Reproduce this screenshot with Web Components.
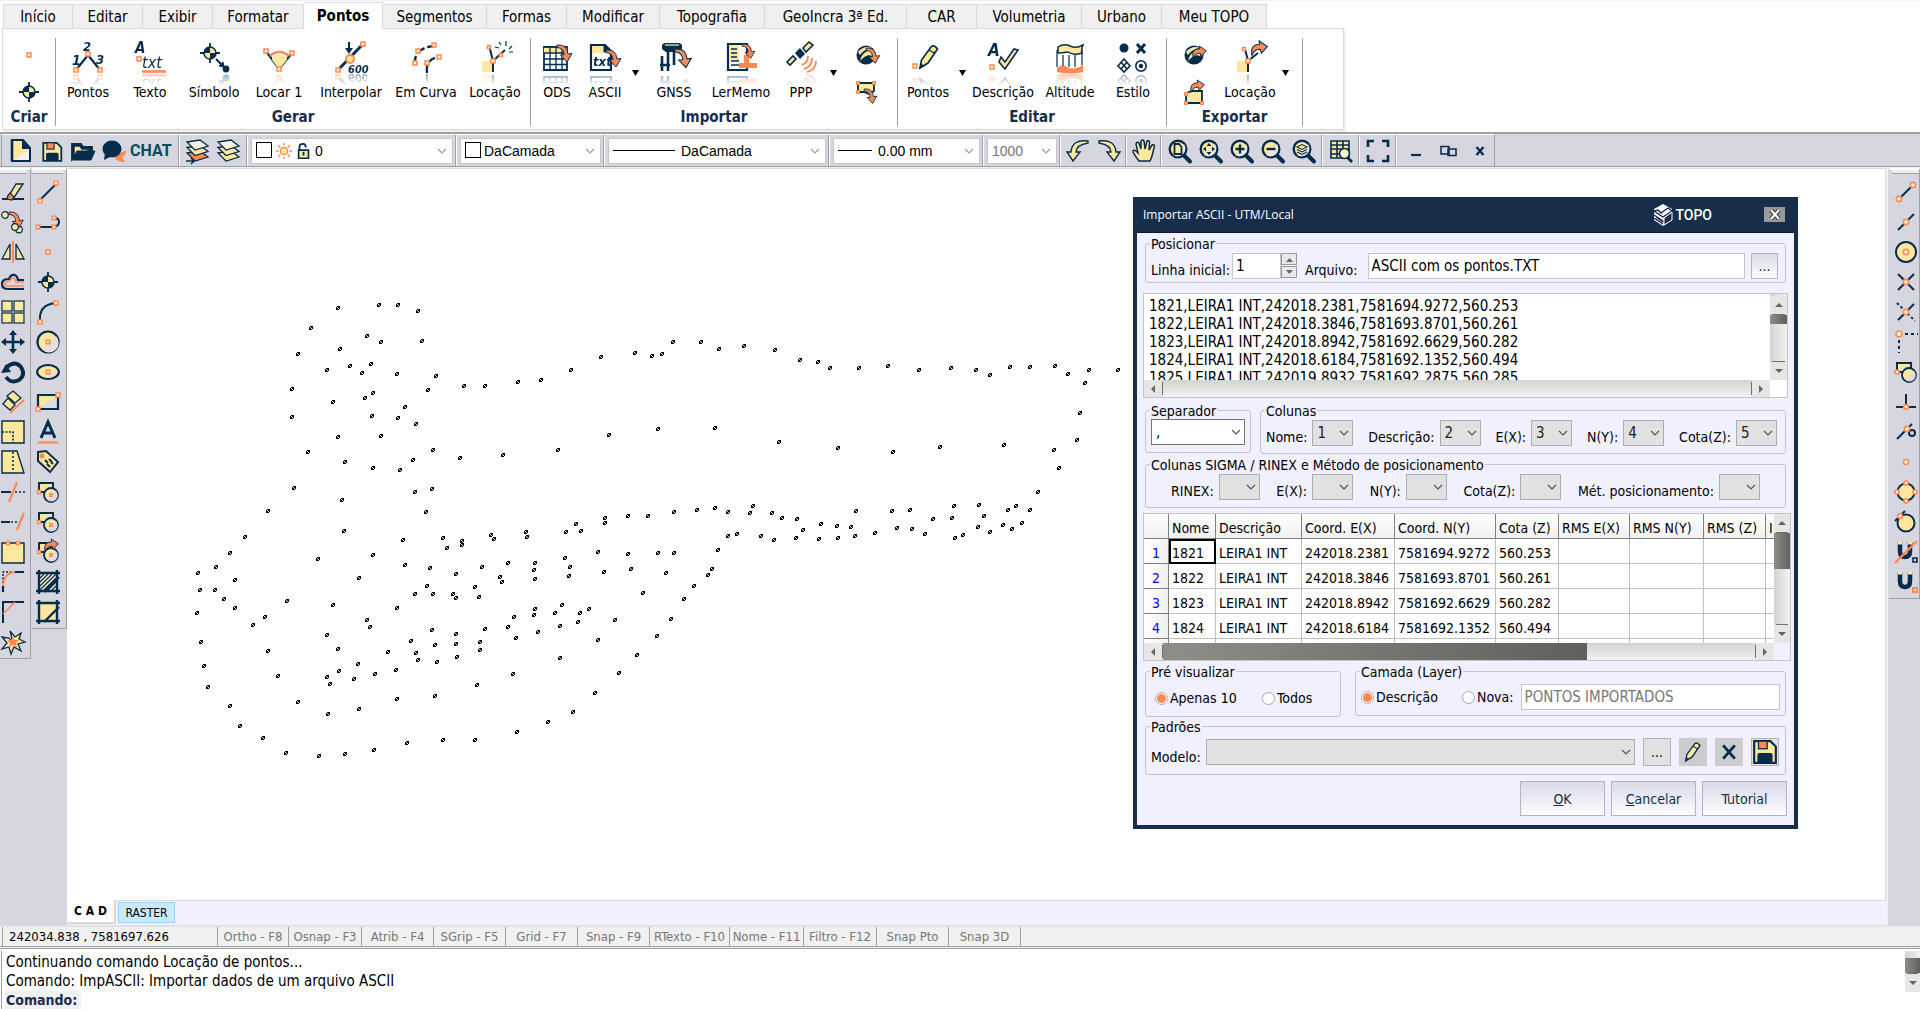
<!DOCTYPE html>
<html lang="pt-BR">
<head>
<meta charset="utf-8">
<title>TOPO</title>
<style>
html,body{margin:0;height:100%}
body{font:14px/18px "DejaVu Sans Condensed","DejaVu Sans",sans-serif;color:#000;background:#fff;overflow:hidden;
--navy:#162e4a;--bar:#d6d6e0;--soft:#f0f0ff;--line:#d9d9d9;--dark:#a0a0a0}
</style>
</head>
<body>
<topo-app></topo-app>
<script>
const N='#062c4c',Y='#ffe79e',O='#ff8a52';
const sq=(x,y,s=4)=>`<rect x="${x-s/2}" y="${y-s/2}" width="${s}" height="${s}" fill="#fff3d8" stroke="${O}" stroke-width="1.5"/>`;
const ci=(x,y,r=2.6)=>`<circle cx="${x}" cy="${y}" r="${r}" fill="#fff" stroke="${O}" stroke-width="1.7"/>`;
const p=(d,w=2,c=N,f='none',x='')=>`<path d="${d}" fill="${f}" stroke="${c}" stroke-width="${w}" ${x}/>`;
const tx=(x,y,s,t,c=N,w=700)=>`<text x="${x}" y="${y}" font-size="${s}" font-weight="${w}" fill="${c}" font-family="DejaVu Sans Condensed,DejaVu Sans,sans-serif">${t}</text>`;
const swoop=(x,y,k=1)=>`<g transform="translate(${x} ${y}) scale(${k})"><path d="M-1 0Q9 -1 10 9L14 8.5L9 17L2.5 10L6 9.8Q6 3 -1 2.5Z" fill="${O}" stroke="${N}" stroke-width="1"/></g>`;
const up=(x,y,k=1)=>`<g transform="translate(${x} ${y}) scale(${k})"><path d="M0 13Q-2 3 7 3L6.500 0L14 5L8.500 11L7.500 7.500Q2 7.500 0 13Z" fill="${O}" stroke="${N}" stroke-width="1"/></g>`;
const target=(x,y,r)=>`<path d="M${x-r-4} ${y}H${x+r+4}M${x} ${y-r-4}V${y+r+4}" stroke="${N}" stroke-width="1.8"/><circle cx="${x}" cy="${y}" r="${r}" fill="${Y}" stroke="${N}" stroke-width="1.5"/><path d="M${x} ${y}V${y-r}A${r} ${r} 0 0 0 ${x-r} ${y}ZM${x} ${y}V${y+r}A${r} ${r} 0 0 0 ${x+r} ${y}Z" fill="${N}"/>`;
const lens=inner=>`<path d="M15.5 16L22 22.5" stroke="${N}" stroke-width="4" stroke-linecap="round"/><circle cx="10" cy="10" r="8.3" fill="${Y}" stroke="${N}" stroke-width="2.4"/><path d="M16 5A8 8 0 0 1 5 16Z" fill="#e9e6e6"/>${inner}`;
const stack=(c)=>[16,10.5,5].map((y,i)=>p(`M1 ${y-2}L14 ${y-4}L22 ${y+2}L9 ${y+6}Z`,1.3,N,i==0&&c?O:i==2?'#f6f0e0':Y)).join('');
const floppy=`<path d="M2 2H17L22 7V22H2Z" fill="${Y}" stroke="${N}" stroke-width="2"/><rect x="6" y="2" width="8" height="7" fill="${O}" stroke="${N}" stroke-width="1.2"/><path d="M5 22V15Q5 13 7 13H17Q19 13 19 15V22Z" fill="${N}"/>`;
const shapes=p('M3 3H17V12H3Z',1.8,N,Y)+p('M17 3V8L8 12H3Z',0,N,'#e2e0dc')+p('M3 3H17V12H3Z',1.8)+`<circle cx="15" cy="15" r="7" fill="${Y}" stroke="${N}" stroke-width="1.8"/><path d="M20 11A6 6 0 0 1 11 19.5Z" fill="#dedce0"/>`;
const pencil=(f=Y)=>p('M8 25L9.500 17L19 4Q22 1 25.500 6L16 20Z',1.7,N,f)+p('M8 25L9 21L11.500 22.500Z',1,N,N)+p('M17 7L23 10.500',1.3);
const globe=`<circle cx="11" cy="12" r="9.5" fill="${N}"/><path d="M3 9Q9 2 17 5Q9 6 5 12ZM5 18Q6 10 15 7Q18 10 17 13Q12 10 5 18Z" fill="${Y}"/>`;
const ICONS={
 point:[24,sq(12,12,4)],target:[24,target(12,12,6)],
 pontos:[32,tx(0,24,14,'1')+tx(11,10,13,'2')+tx(24,23,13,'3')+p('M4 29L16 14L28 29',2.2)+sq(4,29)+sq(16,13)+sq(28,29)],
 texto:[32,tx(1,12,15,'A')+sq(5,18)+tx(8,27,16,'txt',N,400)+p('M8 30.5H32',2.6,O)],
 simbolo:[32,target(12,12,6)+p('M18 18L25 25',2)+p('M26 26L21 25L25 21Z',1,N,N)+`<circle cx="28" cy="28" r="3.4" fill="${N}"/>`],
 locar:[32,p('M3 10L16 28L29 12',2.2)+p('M9 18Q16 10 24 18L16 28Z',1,Y,Y)+p('M7 15Q16 7 26 15',2.6,O)+sq(3,10)+sq(29,12)+sq(16,28)],
 interpolar:[32,p('M3 29L28 3',2.8)+p('M14 1V9',2)+p('M10 7H18L14 13Z',0,N,N)+`<circle cx="15" cy="18" r="4" fill="${Y}" stroke="${O}" stroke-width="2"/>`+sq(28,3)+sq(3,29)+tx(13,32,11,'600')],
 curva:[32,p('M5 24Q3 7 24 5',2.4,N,'none','stroke-dasharray="9 3"')+p('M17 32Q15 17 30 16',2.4,N,'none','stroke-dasharray="8 3"')+sq(24,4)+sq(8,10)+sq(5,22)+sq(17,22)+sq(29,16)],
 locacao:[32,p('M3 20H13V31H3Z',0,N,Y)+p('M14 20L11 8M14 20L26 9M14 20V31',2)+sq(10,6,3)+sq(14,20)+sq(22,14,3)+p('M22 4l-2-3M27 5V0M30 8l3-3M30 11h4M20 7l-4-1',1.2)],
 ods:[32,p('M3 6H26V29H3Z',1.8,N,'#fff')+p('M3 6H26V12H3Z',0,N,Y)+p('M3 12H26M3 18H26M3 23.5H26M9 6V29M15 6V29M21 6V29',1.3)+p('M3 6H26',1.8)+swoop(17,4,1)],
 ascii:[32,p('M2 4H16L22 10V29H2Z',2.2,N,'#fff')+p('M3 5H15V12H3Z',0,N,Y)+p('M15 4V11H22Z',1,N,N)+tx(4,25,13,'txt')+swoop(18,9,1)],
 gnss:[32,p('M4 5Q4 2 8 2H20Q24 2 24 5V8L20 11H8L4 8Z',0,N,N)+p('M7 4H21',1.3,Y)+p('M10 11V30M16 11V24M4 15V30M2 24H12',2.6)+swoop(18,8,1.1)],
 lermemo:[32,p('M3 3H22V29H3Z',2.2,N,'#fff')+p('M4 4H14V20H4Z',0,N,Y)+p('M6 8H12M6 12H12M6 16H12M6 20H14M6 24H14',1.6)+p('M19 14H24V22H32V27H14V22H19Z',0,O,O)+swoop(18,3,.85)],
 ppp:[32,p('M2 21L8 15L11 18L5 24ZM18 7L24 1L28 4L21 11Z',1.6,N,Y)+p('M10 12L15 7L20 13L15 18Z',0,N,N)+p('M17 24Q23 22 23 15M19 28Q27 26 27 17M22 31Q31 29 31 20',1.9,O)],
 globein:[24,globe+swoop(12,5,.9)],
 globeout:[24,globe+up(10,3,.95)],
 polyin:[24,p('M3 3H19V11L14 14L9 12H3Z',1.8,N,Y)+sq(3,3,2.5)+sq(19,3,2.5)+sq(3,12,2.5)+swoop(10,9,.85)],
 polyout:[24,p('M3 13L9 11H19V23H3Z',1.8,N,Y)+sq(3,14,2.5)+sq(3,23,2.5)+sq(19,23,2.5)+up(8,0,.95)],
 lapis:[32,`<g transform="translate(0 2)">${pencil()}</g>`+sq(3,25)],
 descricao:[32,tx(1,15,17,'A')+sq(5,26)+p('M12 21L18 28L31 9L27 8L18 21L14 16Z',1.6,N,Y)],
 altitude:[32,p('M3 27Q8 22 13 26Q20 30 29 24V31Q16 34 3 31Z',0,O,O)+p('M3 26V9M9 25V14M15 26V14M21 26V14M28 24V9',1.2)+p('M4 6Q10 2 16 5Q22 8 29 4Q27 9 28 12Q20 15 14 11Q8 12 4 12Z',1.5,N,Y)],
 estilo:[32,`<circle cx="7" cy="7" r="4.5" fill="${N}"/>`+p('M20 3L28 12M28 3L20 12',3)+p('M7 18L13 25L7 31L1 25ZM4 21L10 28M10 21L4 28',1.6)+`<circle cx="24" cy="25" r="5.2" fill="none" stroke="${N}" stroke-width="1.6"/><circle cx="24" cy="25" r="2.2" fill="${N}"/>`],
 exlocacao:[32,p('M3 20H13V31H3Z',0,N,Y)+p('M14 20L11 8M14 20L24 12M14 20V31',2)+sq(10,8,3)+sq(14,20)+up(18,0,1.1)],
 novo:[24,p('M3 1H14L21 9V22H3Z',2,N,'#f2f2f5')+p('M4 2H13V10L20 12L4 21Z',0,N,Y)+p('M13 1V10H21Z',0,N,N)+p('M3 1V22',2.6)],
 salvar:[24,`<g transform="translate(1.5 2) scale(.9)">${floppy}</g>`],disquete:[24,floppy],
 abrir:[24,p('M1 20V5H10L12 8H21V11H7L1 20Z',1.8,N,N)+p('M3 18V7H9L11 10H19',1.5,N,Y)+p('M1 21L6 12H24L20 21Z',1,N,N)],
 chat:[24,`<path d="M24 11Q24 17 20 18L23 23Q15 23 12 18Z" fill="${O}"/><ellipse cx="10" cy="10" rx="9.5" ry="8.5" fill="${N}"/><path d="M3 14L2 21L10 17Z" fill="${N}"/>`],
 camada1:[24,stack(1)+p('M0 22H8M5 19L8 22L5 25',1.5)],camada2:[24,stack(0)],
 undo:[24,p('M22 2Q6 0 5 13H1L7 22L14 13H10Q10 6 22 4Z',1.4,N,Y)],
 redo:[24,p('M2 2Q18 0 19 13H23L17 22L10 13H14Q14 6 2 4Z',1.4,N,Y)],
 mao:[24,p('M7 22Q3 17 1 13Q1 10 4 12L6 14L4 5Q5 2 7 4L9 10L9 2Q11 0 12 2L13 10L15 2Q17 1 17.500 3L17 11L20 6Q22 5 22.500 7L20 17Q19 20 18 22Z',1.5,N,Y)],
 z1:[24,lens(p('M6.500 5H11L13.500 8V15H6.500Z',1.8,N,Y))],
 z2:[24,lens(p('M10 4L12.500 7H7.500ZM10 16L12.500 13H7.500ZM4 10L7 7.500V12.500ZM16 10L13 7.500V12.500Z',0,N,N))],
 z3:[24,lens(p('M5.500 10H14.500M10 5.500V14.500',2.4))],z4:[24,lens(p('M5.500 10H14.500',2.4))],
 z5:[24,lens(p('M5 8L10 5.500L15 8L10 10.500ZM5 10.500L10 13L15 10.500M5 13L10 15.500L15 13',1.1,N,'none'))],
 tabela:[24,p('M2 2H20V19H2Z',1.6,N,Y)+p('M2 6H20M2 10H20M2 15H20M8 2V19M14 2V19',1.6)+p('M18 18L23 23',2.8)+`<circle cx="15.500" cy="14.500" r="5" fill="#fff3d0" stroke="${N}" stroke-width="1.6"/>`],
 full:[24,p('M2 8V2H8M16 2H22V8M22 16V22H16M8 22H2V16',2.6)],
 min:[24,p('M7 16H17',2.2)],rest:[24,p('M5 7.500H13V15H5ZM12 10H20V16.500H12Z',1.5)],fechar:[24,p('M8.500 8L15.500 16M15.500 8L8.500 16',2.3)],
 sol:[20,`<circle cx="10" cy="10" r="4" fill="${Y}" stroke="${O}" stroke-width="1.6"/>`+p('M10 1V4M10 16V19M1 10H4M16 10H19M3.500 3.500L6 6M14 14L16.500 16.500M3.500 16.500L6 14M14 6L16.500 3.500',1.5,O)],
 cadeado:[20,p('M5 9V5Q5 2 9 2Q12 2 12 6',2)+p('M4 9H15V18H4Z',1.8,N,Y)+p('M9.500 11V15',2)],
 apagar:[24,p('M1 19H23',2)+p('M15 4H22L12 19H6Z',1.4,N,Y)+p('M9 13L13 17L11 20L6 19Q6 16 9 13Z',1.2,N,O)],
 copiar:[24,`<circle cx="4" cy="5" r="3.3" fill="${Y}" stroke="${N}" stroke-width="1.2"/><circle cx="18" cy="19.500" r="3.300" fill="${Y}" stroke="${N}" stroke-width="1.2"/>`+swoop(9,2,.95)+`<circle cx="14" cy="17" r="3.3" fill="${Y}" stroke="${N}" stroke-width="1.2"/>`],
 espelho:[24,p('M9 4V19H1ZM15 4V19H23Z',1.3,N,Y)+p('M12 1V23',2,O)],
 offset:[24,p('M23 10H17Q16 4 11 5Q9 6 8 9Q1 9 1 14Q1 19 7 19H23',2.2)+p('M23 12H15Q14 7 11 8Q9 11 8 11Q4 12 4 14Q4 16 7 16H23',1.4,O)],
 matriz:[24,[[1,1],[13,1],[1,13],[13,13]].map(a=>`<rect x="${a[0]}" y="${a[1]}" width="10" height="10" fill="${Y}" stroke="${N}" stroke-width="1.200"/>`).join('')],
 mover:[24,p('M3 12H21M12 3V21',2.6)+p('M12 0L16 5H8ZM12 24L16 19H8ZM0 12L5 8V16ZM24 12L19 8V16Z',0,N,N)],
 girar:[24,p('M6 7Q14 0 20 7Q25 15 18 20Q10 24 5 17',3.8)+p('M0 13L5 4L10 12Z',0,N,N)],
 alinhar:[24,p('M6 6L12 1L20 8L14 13ZM2 14L7 8L14 15L9 20Z',1.3,N,Y)+p('M9 23L23 10',2,O)],
 escala:[24,p('M1 1H23V23H1Z',1.4,N,Y)+p('M1 12H12V23',1.6,N,'none','stroke-dasharray="2 1.500"')],
 esticar:[24,p('M1 1H16L23 23H1Z',1.4,N,Y)+p('M12 2V22',1.6,N,'none','stroke-dasharray="2 2"')],
 cortar:[24,p('M0 12H10',2)+p('M14 12H24',1.4,N,'none','stroke-dasharray="2 2"')+p('M16 2L8 22',2.2,O)],
 estender:[24,p('M0 12H9',2)+p('M10 12H19',1.4,N,'none','stroke-dasharray="2 2"')+p('M23 3L16 20',2.2,O)],
 quebrar:[24,p('M1 3H23V23H1Z',1.4,N,Y)+sq(7,3,3)+sq(17,3,3)],
 filete:[24,p('M2 22V16M14 2H23',2.2)+p('M2 13V2H12',1.6,N,'none','stroke-dasharray="2 1.500"')+p('M2 16Q3 3 14 2',1.8,O)],
 chanfro:[24,p('M2 23V2H23',2)+p('M2 14L14 2',1.6,O)],
 explodir:[24,p('M12 12L9 1L14 7L20 3L18 9L24 12L17 14L20 21L13 17L10 24L8 17L1 19L6 13L1 7L8 8Z',1.3,N,Y)+p('M12 7L13.500 10L18 10L15 13L16 17L12 15L8 17L9 13L6 10L10 10Z',0,O,O)],
 linha:[24,p('M4 20L20 4',2)+sq(4,21)+sq(20,3)],
 poli:[24,p('M2 17H18Q23 16 23 12Q23 8 18 8',2)+sq(2,17,3.500)+sq(18,17,3.500)+sq(18,8,3.500)],
 arco:[24,p('M4 20Q3 5 19 3',2)+sq(4,22)+sq(20,3)],
 circulo:[24,`<circle cx="12" cy="12" r="10.500" fill="${Y}" stroke="${N}" stroke-width="2.200"/><path d="M20 6A9.400 9.400 0 0 1 6 19.500Z" fill="#e2dfdc"/>`+sq(12,12,3.500)],
 elipse:[24,`<ellipse cx="12" cy="12" rx="10.800" ry="7" fill="${Y}" stroke="${N}" stroke-width="2.200"/><path d="M20 8Q22 17 10 18Z" fill="#e2dfdc"/>`+sq(12,12,3.500)],
 ret:[24,p('M2 5H22V19H2Z',0,N,Y)+p('M22 5V19H2Z',0,N,'#dcdae0')+p('M2 5H22V19H2Z',2.2)+sq(2,19)+sq(22,5)],
 letra:[24,p('M5 18L12 2L19 18M8 13H16',3)+p('M2 22.500H22',2.2,O)],
 tag:[24,p('M2 2L10 1L22 12L14 22L2 11Z',2,N,Y)+`<circle cx="6" cy="6" r="2.500" fill="${O}"/>`+p('M9 10l3 3M13 9l3 3M11 14l3 3M15 12l2 2',2)],
 f1:[24,shapes+sq(3,12,3)+sq(15,15,2.500)],f2:[24,shapes+sq(3,12,3)+sq(15,15,2.500)],
 f3:[24,shapes+sq(3,12,3)+sq(15,15,2.500)+up(9,-1,.95)],
 hach:[24,p('M3 3H21V21H3Z',0,N,'#f5ebc4')+p('M4 8L8 4M4 12L12 4M4 16L16 4M4 20L20 4M8 20L20 8M12 20L20 12M16 20L20 16',1.2)+p('M3 0V24M21 0V24M0 3H24M0 21H24',2.400)+p('M8 22L23 7',2.4)],
 contorno:[24,p('M3 3H21V21H3Z',0,N,Y)+p('M3 0V24M21 0V24M0 3H24M0 21H24',2.400)+p('M8 22L23 7',2.4)],
 s1:[24,p('M5 19L19 5',2)+ci(5,19)+ci(19,5)],s2:[24,p('M4 20L20 4',2)+ci(12,12)],
 s3:[24,`<circle cx="12" cy="12" r="10" fill="${Y}" stroke="${N}" stroke-width="2"/>`+ci(12,12)],
 s4:[24,p('M4 4L20 20M20 4L4 20',2)+ci(12,12)],s5:[24,p('M20 4L4 20',2)+p('M3 3L21 21',2,N,'none','stroke-dasharray="2.500 2.500"')+ci(12,12)],
 s6:[24,p('M5 4H24M5 4V23',2,N,'none','stroke-dasharray="3 3"')+ci(5,4,3)],s7:[24,shapes+ci(3,12,2)],
 s8:[24,p('M12 4V17M2 17H22',2)+ci(12,17,2.300)],s9:[24,p('M3 19L18 4',2)+`<circle cx="18" cy="13" r="3" fill="none" stroke="${N}" stroke-width="2"/>`+ci(13,9)],
 s10:[24,ci(12,12,2.500)],s11:[24,`<circle cx="12" cy="12" r="8.500" fill="${Y}" stroke="${N}" stroke-width="2"/>`+ci(12,3,2)+ci(12,21,2)+ci(3,12,2)+ci(21,12,2)],
 s12:[24,`<circle cx="12" cy="13" r="8.500" fill="${Y}" stroke="${N}" stroke-width="2"/>`+p('M1 11L11 1',2)+ci(6,6,2.300)],
 s13:[24,p('M6 2V11Q6 17 11 17Q16 17 16 11V2',4.500)+p('M4 3H8M14 3H18',3,Y)+p('M19 18H23V22H19Z',1.6)+p('M1 23L23 1',2.400,O)],
 s14:[24,p('M6 2V11Q6 17 11 17Q16 17 16 11V2',4.500)+p('M4 3H8M14 3H18',3,Y)+p('M19 18H23V22H19Z',2,O,Y)],
 xis:[24,p('M5 4L19 20M19 4L5 20',3.400)],edit:[32,`<g transform="translate(-1 2)">${pencil('#f4f0a8')}</g>`]
};
const svg=(n,s)=>{const i=ICONS[n];return `<svg viewBox="0 0 ${i[0]} ${i[0]}" width="${s||i[0]}" height="${s||i[0]}" aria-hidden="true" style="display:block;overflow:visible">${i[1]}</svg>`};
const CHEV='<svg class="chev" viewBox="0 0 10 6" width="10" height="6"><path d="M1 1L5 5L9 1" fill="none" stroke="currentColor" stroke-width="1.200"/></svg>';
class Base extends HTMLElement{
 connectedCallback(){if(!this.shadowRoot)this.attachShadow({mode:'open'}).innerHTML=this.render()}
 a(n,d=''){return this.getAttribute(n)??d}
}
const def=(n,f)=>customElements.define(n,class extends Base{render(){return f(this)}});
const BTN='button{appearance:none;border:0;background:none;padding:0;margin:0;font:inherit;color:inherit}';

def('topo-tabs',()=>`<style>:host{display:flex;align-items:flex-end;height:27px;padding-left:3px;border-top:1px solid var(--soft);font-size:15px}${BTN}
button{height:24px;flex:none;width:var(--w);background:#f0f0f0;border:1px solid var(--line);border-left:0;border-bottom:0}
button[aria-selected=true]{height:27px;margin-bottom:-1px;background:#fff;font-weight:bold;position:relative}
button:first-child{border-left:1px solid var(--line)}div{display:flex;align-items:flex-end}</style>
<div role="tablist">${[['Início',70],['Editar',70],['Exibir',70],['Formatar',91],['Pontos',79],['Segmentos',104],['Formas',80],['Modificar',93],['Topografia',105],['GeoIncra 3ª Ed.',142],['CAR',70],['Volumetria',105],['Urbano',80],['Meu TOPO',105]].map(([t,w])=>`<button role="tab" aria-selected="${t=='Pontos'}" style="--w:${w}px">${t}</button>`).join('')}</div>`);

def('ribbon-group',e=>`<style>:host{display:flex;flex-direction:column;border-right:1px solid var(--dark);flex:none;height:88px}
div{display:flex;flex:1;padding:3px 2px 0}h2{margin:0;font-size:15px;line-height:18px;text-align:center;color:var(--navy)}</style><div><slot></slot></div><h2>${e.a('name')}</h2>`);
def('ribbon-button',e=>`<style>:host{display:block;width:var(--w)}${BTN}button{width:100%;display:flex;flex-direction:column;align-items:center;gap:10px}
i{-webkit-box-reflect:below 1px linear-gradient(transparent 62%,rgba(0,0,0,.4))}span{white-space:nowrap;position:relative}</style><button><i>${svg(e.a('icon'))}</i><span>${e.a('label')}</span></button>`);
def('ribbon-stack',e=>`<style>:host{display:flex;flex-direction:column;gap:13px;padding-top:2px;width:var(--w);align-items:center}${BTN}</style>${e.a('icons').split(' ').map(i=>`<button aria-label="${i}">${svg(i)}</button>`).join('')}`);
def('ribbon-arrow',()=>`<style>:host{display:flex;align-items:flex-start;padding-top:29px;width:12px;justify-content:center}${BTN}</style><button aria-label="Mais"><svg width="7" height="6" style="display:block"><path d="M0 0H7L3.500 6Z"/></svg></button>`);
def('topo-ribbon',()=>{const b=(i,l,w)=>`<ribbon-button icon="${i}" label="${l}" style="--w:${w}px"></ribbon-button>`;const s=(i,w)=>`<ribbon-stack icons="${i}" style="--w:${w}px"></ribbon-stack>`;const ar='<ribbon-arrow></ribbon-arrow>';
return `<style>:host{display:flex;width:fit-content;margin-left:2px;border:1px solid var(--line);padding:9px 40px 3px 0;box-shadow:2px 2px 0 #f0f0f0}</style>
<ribbon-group name="Criar">${s('point target',48)}</ribbon-group>
<ribbon-group name="Gerar">${b('pontos','Pontos',60)+b('texto','Texto',64)+b('simbolo','Símbolo',64)+b('locar','Locar 1',66)+b('interpolar','Interpolar',78)+b('curva','Em Curva',72)+b('locacao','Locação',66)}</ribbon-group>
<ribbon-group name="Importar">${b('ods','ODS',48)+b('ascii','ASCII',48)+ar+b('gnss','GNSS',66)+b('lermemo','LerMemo',68)+b('ppp','PPP',52)+ar+s('globein polyin',56)}</ribbon-group>
<ribbon-group name="Editar">${b('lapis','Pontos',56)+ar+b('descricao','Descrição',70)+b('altitude','Altitude',64)+b('estilo','Estilo',62)}</ribbon-group>
<ribbon-group name="Exportar">${s('globeout polyout',52)+b('exlocacao','Locação',58)+ar+'<span style="width:9px"></span>'}</ribbon-group>`});

def('tool-button',e=>`<style>:host{display:block;flex:none}${BTN}button{display:flex;align-items:center;gap:4px;font:bold 16px/24px Roboto,sans-serif;color:#064a60}</style><button aria-label="${e.a('icon')}">${svg(e.a('icon'),24)}<slot></slot></button>`);
def('tool-sep',()=>`<style>:host{display:block;flex:none;width:1px;align-self:stretch;background:var(--dark);border-right:1px solid #fff;margin:0 3px 0 2px}</style>`);
def('tool-combo',e=>`<style>:host{flex:none;display:grid;grid-template-columns:auto 1fr;align-items:center;width:var(--w);height:26px;box-sizing:border-box;background:#fff;border:1px solid #c6c6cc;padding-left:4px;font:14px/18px "Liberation Sans",sans-serif}
select{appearance:none;border:0;background:none;font:inherit;color:${e.hasAttribute('dim')?'#777':'#000'};width:100%;padding:0;grid-area:1/2;opacity:1}.chev{grid-area:1/2;justify-self:end;margin-right:5px;color:#999;pointer-events:none}
::slotted(*){margin-right:2px}.lead{display:flex;align-items:center}</style><span class="lead"><slot></slot></span><select aria-label="${e.a('name')}"><option>${e.a('value')}</option></select>${CHEV}`);
def('top-toolbar',()=>{const t=n=>`<tool-button icon="${n}"></tool-button>`;const S='<tool-sep></tool-sep>';const box='<svg width="17" height="17"><rect x=".5" y=".5" width="15" height="15" fill="#fff" stroke="#000"/></svg>';const ln=w=>`<svg width="${w}" height="3"><path d="M0 1.500H${w-4}" stroke="#000"/></svg>`;
return `<style>:host{display:flex;margin-top:2px;background:var(--bar);border-top:2px solid var(--dark);border-bottom:1px solid var(--dark);height:32px}
div{display:flex;align-items:center;padding-left:7px;border-left:1px solid var(--dark);border-right:1px solid var(--dark);border-top:1px solid #fff;margin-left:1px;width:1485px}
.g{display:flex;gap:7px;flex:none;padding:0 2px}.g.a{width:167px;padding:0}.g.u{padding:0 3px}.g.w{gap:8px;padding:0 4px}</style>
<div><span class="g a">${t('novo')+t('salvar')+t('abrir')}<tool-button icon="chat">CHAT</tool-button></span>${S}<span class="g u">${t('camada1')+t('camada2')}</span>${S}
<tool-combo name="Camada" value="0" style="--w:202px">${box+svg('sol',18)+svg('cadeado',18)}</tool-combo>${S}
<tool-combo name="Cor" value="DaCamada" style="--w:141px">${box}</tool-combo>${S}
<tool-combo name="Tipo de linha" value="DaCamada" style="--w:218px">${ln(66)}</tool-combo>${S}
<tool-combo name="Espessura" value="0.00 mm" style="--w:147px">${ln(38)}</tool-combo>${S}
<tool-combo name="Escala" value="1000" dim style="--w:70px"></tool-combo>${S}
<span class="g">${t('undo')+t('redo')}</span>${S}<span class="g">${t('mao')}</span>${S}<span class="g u">${t('z1')+t('z2')+t('z3')+t('z4')+t('z5')}</span>${S}<span class="g u">${t('tabela')}</span>${S}<span class="g u">${t('full')}</span>${S}<span class="g w">${t('min')+t('rest')+t('fechar')}</span></div>`});

def('side-bar',e=>`<style>:host{display:flex;flex-direction:column;align-self:flex-start;align-items:center;gap:6px;width:var(--w);box-sizing:border-box;padding:0 var(--pr,4px) 4px var(--pl,0);border-right:1px solid var(--dark);border-bottom:1px solid var(--dark);border-top:2px solid #fff}
i{height:3px;align-self:stretch;border-bottom:1px solid var(--dark);background:#eee}</style><i></i>${e.a('icons').split(' ').map(i=>`<tool-button icon="${i}"></tool-button>`).join('')}`);

const A=`475,53 596,45 653,45 713,64 393,113 560,139 603,155 726,154 481,178 354,191 574,221 510,227 442,240 546,250 651,252 768,257 337,296 745,301 579,308 554,325 460,336 674,350 577,379 337,382 654,383 708,402 475,441 604,439 758,479 383,486 839,504 495,517 700,511 580,534 659,540 341,594 755,597 705,605 485,629 263,663 738,667 492,723 196,741 670,751 789,745 846,752 847,766 802,775 149,790 578,795 414,806 108,830 674,825 751,835 829,851 55,849 165,870 536,864 742,888 706,912 759,912 819,912 828,924 59,900 104,900 132,926 321,932 459,946 652,954 165,954 52,968 254,980 562,989 569,1010 219,1005 440,1035 755,1019 692,1052 828,1032 764,1064 827,1062 63,1056 475,1078 265,1084 623,1085 709,1090 713,1110 771,1116 830,1101 71,1127 534,1121 477,1143 647,1139 585,1151 293,1158 440,1161 522,1168 449,1182 83,1192 764,1217 651,1227 354,1237 150,1248 537,1257 443,1272 179,1308 249,1343 318,1389 418,1397 496,1393 583,1380 681,1358 788,1350 885,1349 1011,1326 1104,1296 1179,1266 1246,1210 1317,1148 1371,1095 1430,1038 1254,1049 1306,989 1389,910 1228,958 1201,970 1195,997 1147,944 1125,969 1140,1007 1073,1025 1065,958 1061,974 1003,982 985,1010 915,1016 1008,1043 901,1055 901,1079 1140,1105 998,1151 891,1185 896,921 885,891 961,860 967,875 906,831 983,819 1065,819 1061,840 1064,867 1155,803 1169,832 1167,858 1271,846 1253,785 1343,791 1354,837 1433,788 1275,684 1275,698 1203,722 1188,701 1157,726 1037,725 1041,740 932,736 941,746 1343,678 1404,678 1133,480 968,495 1287,436 1435,417 853,288 916,287 1014,275 1083,269 1173,239 1262,200 1365,188 1416,198`;
const B=`66,102 99,66 183,66 237,87 313,78 405,90 480,121 533,127 570,145 658,145 743,138 837,150 934,145 1009,150 1051,165 1111,141 1170,141 1245,138 1284,161 1347,150 1434,150 1335,188 1320,279 1311,359 1242,390 1257,443 1195,516 1091,375 900,381 759,396 594,384 417,366 224,323 102,575 171,570 225,564 264,575 339,558 330,579 396,578 426,595 470,597 489,629 543,612 591,617 633,620 648,573 756,574 810,570 878,596 937,595 942,558 1018,555 1033,588 1105,570 1129,558 1171,571 1147,609 1116,626 1089,615 1050,635 1015,621 968,644 944,654 854,642 816,628 770,625 705,638 645,648 594,653 537,656 468,653 402,659 363,648 291,642 264,647 234,690 102,700 216,747 204,765 78,759 163,797 133,838 92,897`;
const plot=(s,ox,oy)=>s.split(' ').map(q=>{const [x,y]=q.split(',');return `M${Math.round(ox+x/3)-2} ${Math.round(oy+y/3)-2}m1 0h3v1h-3zm-1 1h1v2h-1zm3 0h1v2h-1zm-1 0h1v1h-1zm-1 1h1v1h-1zm-1 1h3v1h-3z`}).join('');
def('cad-canvas',()=>`<style>:host{display:block;overflow:hidden;background:#fff}svg{display:block}</style><svg width="1140" height="725" shape-rendering="crispEdges"><path d="${plot(A,113,121)+plot(B,573,151)}"/></svg>`);

def('scroll-bar',e=>{const v=e.hasAttribute('vertical');const ar=(d)=>`<button aria-label="rolar"><svg width="8" height="8" viewBox="0 0 8 8"><path d="${d}" fill="#666660"/></svg></button>`;
return `<style>:host{display:flex;flex-direction:${v?'column':'row'};background:linear-gradient(${v?'90deg':'180deg'},#d0d4d0,#f2f2f2)}${BTN}
button{${v?'height:18px;width:100%':'width:18px;height:100%'};background:#e6e6e4;display:flex;align-items:center;justify-content:center;flex:none}
b{background:linear-gradient(90deg,#8e8e88,#60605c);flex:none;${v?'width:100%;height:var(--t)':'height:100%;width:var(--t)'}}i{flex:1}u{background:#70706c;flex:none;${v?'height:1px;margin:0 2px':'width:1px;margin:2px 0'}}</style>
${e.hasAttribute('nostart')?'':ar(v?'M0 6H8L4 2Z':'M6 0V8L2 4Z')+'<u></u>'}<b></b><i></i><u></u>${ar(v?'M0 2H8L4 6Z':'M2 0V8L6 4Z')}`});

def('form-group',e=>`<style>:host{display:block;flex:none}fieldset{margin:0;min-width:0;border:1px solid #c4c4d0;border-radius:3px;padding:0 5px var(--pb,7px);box-sizing:border-box}legend{height:18px;box-sizing:border-box;padding:1px 1px 0;margin-left:-1px}
div{display:flex;align-items:center;padding-top:var(--pt,0)}</style><fieldset><legend>${e.a('legend')}</legend><div><slot></slot></div></fieldset>`);
def('form-select',e=>`<style>:host{display:block;flex:none}label{display:flex;align-items:center;gap:5px;white-space:nowrap}label>span:empty{display:none}label>span{padding-top:9px}
.b{display:grid;align-items:center;flex:1;min-width:0;width:var(--w)}select{appearance:none;grid-area:1/1;width:100%;height:26px;border:1px solid #adadad;border-radius:0;background:#e1e1e1;padding:0 4px;font:inherit;font-size:15px;color:#222;box-sizing:border-box;opacity:1}
.chev{grid-area:1/1;justify-self:end;margin-right:4px;color:#555;pointer-events:none}${e.hasAttribute('white')?'select{background:#fff;border-color:#777;color:#000}':''}</style>
<label><span>${e.a('label')}</span><div class="b"><select ${e.a('label')?'':`aria-label="${e.a('name')}"`}><option>${e.a('value')}</option></select>${CHEV}</div></label>`);
def('points-grid',()=>{const H=['','Nome','Descrição','Coord. E(X)','Coord. N(Y)','Cota (Z)','RMS E(X)','RMS N(Y)','RMS (Z)','I'];const W=[25,47,86,93,101,63,71,74,62,60];
const R=[['1821','242018.2381','7581694.9272','560.253'],['1822','242018.3846','7581693.8701','560.261'],['1823','242018.8942','7581692.6629','560.282'],['1824','242018.6184','7581692.1352','560.494'],['','','','']];
return `<style>:host{display:grid;grid-template-columns:1fr 16px;grid-template-rows:129px 17px;border:1px solid #c4c4cc;background:#fff}
.v{overflow:hidden;min-width:0}table{border-collapse:separate;border-spacing:0;table-layout:fixed;width:682px}
th,td{height:25px;box-sizing:border-box;padding:3px 0 0 3px;text-align:left;font-weight:normal;white-space:nowrap;overflow:hidden;border-right:1px solid #c0c0c0;border-bottom:1px solid #c0c0c0}
thead th{background:linear-gradient(#fff,#f0f0f0);border-color:#808080}tbody th{background:linear-gradient(90deg,#fff,#f0f0f0);border-color:#808080;color:#00f;text-align:center;padding-left:0}
td.cur{outline:2px solid #000;outline-offset:-2px}scroll-bar[vertical]{grid-column:2}p{margin:0;background:var(--soft)}</style>
<div class="v"><table><colgroup>${W.map(w=>`<col style="width:${w}px">`).join('')}</colgroup><thead><tr>${H.map(h=>`<th>${h}</th>`).join('')}</tr></thead><tbody>${R.map((r,i)=>`<tr><th>${r[0]?i+1:''}</th><td${i?'':' class="cur"'}>${r[0]}</td><td>${r[0]?'LEIRA1 INT':''}</td><td>${r[1]}</td><td>${r[2]}</td><td>${r[3]}</td><td></td><td></td><td></td><td></td></tr>`).join('')}</tbody></table></div>
<scroll-bar vertical style="--t:36px"></scroll-bar><scroll-bar style="--t:424px"></scroll-bar><p></p>`});

def('import-dialog',()=>{const s=(l,v,w,x='')=>`<form-select label="${l}" value="${v}" style="--w:${w}px" ${x}></form-select>`;
return `<style>:host{display:block;box-sizing:border-box;width:665px;background:var(--soft);border:4px solid var(--navy);border-top:0}
header{display:flex;align-items:center;height:35px;background:var(--navy);color:#fff;font:12px/18px "Open Sans",sans-serif;padding:0 9px 0 6px;border-bottom:1px solid #0a1c30}
h1{font:inherit;margin:0;flex:1}.logo{display:flex;gap:1px;align-items:center;font:500 14px/20px Roboto,sans-serif;margin-right:52px}${BTN}
header button{width:21px;height:15px;background:#9a9a98;display:flex;align-items:center;justify-content:center}
main{padding:1px 6px 9px;display:flex;flex-direction:column}
form-group{margin:0 2px}input[type=text],textarea{font:inherit;font-size:15px;border:1px solid #c4c4cc;background:#fff;box-sizing:border-box;height:26px;padding:0 3px;border-radius:0;outline:0;min-width:0}
label{white-space:nowrap}.lo{padding-top:9px}.sp{display:flex;flex-direction:column;gap:1px;margin:0 8px 0 0}.sp button{width:16px;height:12px;border:1px solid #999;box-sizing:border-box;background:#e8e8ec;display:flex;align-items:center;justify-content:center}
.gb{background:linear-gradient(#dadae8,#fcfcff);border:1px solid #b4b4c8;color:var(--navy);text-align:center;box-sizing:border-box}
.memo{display:grid;grid-template-columns:1fr 17px;grid-template-rows:86px 17px;border:1px solid #c4c4cc;margin:10px 0 3px;background:#fff}.memo textarea{border:0;height:auto;resize:none;overflow:hidden;padding:3px 5px 0;white-space:pre;line-height:18px}.memo scroll-bar[vertical]{padding-top:2px}
.row{display:flex;gap:9px;margin:0 2px}.row form-group{margin:0}.sq{width:28px;height:28px;border:1px solid #b4b4b4;background:#e1e1e1;display:flex;align-items:center;justify-content:center;box-sizing:border-box;flex:none}.sq.d{background:#ccc;border-color:#ccc}
input[type=radio]{appearance:none;width:13px;height:13px;border:1px solid #aaa;border-radius:50%;background:#fff;margin:0 2px 0 0;flex:none}input[type=radio]:checked{background:radial-gradient(#ff8a52 0 4px,#fff 5px)}
.r{display:flex;align-items:center;padding-top:1px}footer{display:flex;justify-content:flex-end;gap:6px;margin-top:6px;padding-right:1px}footer button{width:85px;height:35px}.spread{display:flex;justify-content:space-between;flex:1;align-items:center}.fill{flex:1}</style>
<header><h1>Importar ASCII - UTM/Local</h1><span class="logo"><svg width="22" height="24" viewBox="0 0 22 24"><path d="M11 1L20 6V17L11 23L2 17V6Z" fill="#fff"/><path d="M2 8L6 7L9 10L16 5L20 8L11 14ZM2 12L11 18M4 14L11 19L15 16M2 15L11 21" fill="none" stroke="#162e4a" stroke-width="1.400"/><path d="M12 15L20 9V17L12 22Z" fill="#162e4a" stroke="#fff" stroke-width="1"/></svg>TOPO</span><button aria-label="Fechar"><svg width="12" height="11" viewBox="0 0 12 11"><path d="M2 1L10 10M10 1L2 10" stroke="#444" stroke-width="4.500"/><path d="M2 1L10 10M10 1L2 10" stroke="#fff" stroke-width="2"/></svg></button></header>
<main>
<form-group legend="Posicionar" style="--pb:3px"><label class="lo" for="li">Linha inicial:</label><input id="li" type="text" value="1" style="width:49px;margin-left:2px"><span class="sp"><button aria-label="Mais"><svg width="7" height="5"><path d="M0 5H7L3.500 1Z" fill="#666"/></svg></button><button aria-label="Menos"><svg width="7" height="5"><path d="M0 0H7L3.500 4Z" fill="#666"/></svg></button></span><label class="lo" for="aq">Arquivo:</label><input id="aq" type="text" value="ASCII com os pontos.TXT" style="flex:1;margin:0 6px 0 10px"><button class="gb" style="width:27px;height:26px;margin-right:2px">...</button></form-group>
<div class="memo"><textarea aria-label="Arquivo ASCII" wrap="off">1821,LEIRA1 INT,242018.2381,7581694.9272,560.253
1822,LEIRA1 INT,242018.3846,7581693.8701,560.261
1823,LEIRA1 INT,242018.8942,7581692.6629,560.282
1824,LEIRA1 INT,242018.6184,7581692.1352,560.494
1825,LEIRA1 INT,242019.8932,7581692.2875,560.285</textarea><scroll-bar vertical style="--t:9px"></scroll-bar><scroll-bar style="--t:0px"></scroll-bar></div>
<div class="row"><form-group legend="Separador">${s('',',',94,'white name="Separador"')}</form-group><form-group class="fill" legend="Colunas"><div class="spread" style="padding-right:3px">${s('Nome:','1',41)+s('Descrição:','2',41)+s('E(X):','3',41)+s('N(Y):','4',41)+s('Cota(Z):','5',41)}</div></form-group></div>
<form-group legend="Colunas SIGMA / RINEX e Método de posicionamento" style="margin-top:1px"><div class="spread" style="padding:0 20px">${['RINEX:','E(X):','N(Y):','Cota(Z):','Mét. posicionamento:'].map(l=>s(l,'',41)).join('')}</div></form-group>
<points-grid style="margin:5px -3px 0 0"></points-grid>
<div class="row" style="gap:14px;margin-top:1px"><form-group legend="Pré visualizar" style="--pt:4px;--pb:5px"><div class="r" style="width:184px;height:26px"><input type="radio" name="pv" id="p1" style="margin-left:4px" checked><label for="p1" style="width:92px">Apenas 10</label><input type="radio" name="pv" id="p2"><label for="p2">Todos</label></div></form-group>
<form-group class="fill" legend="Camada (Layer)" style="--pt:4px;--pb:5px"><input type="radio" name="cm" id="c1" checked><label for="c1" style="width:86px">Descrição</label><input type="radio" name="cm" id="c2"><label for="c2">Nova:</label><input type="text" aria-label="Nova camada" value="PONTOS IMPORTADOS" style="flex:1;color:#777;margin-left:7px"></form-group></div>
<form-group legend="Padrões" style="--pt:3px;--pb:8px"><div class="spread" style="gap:8px;padding-right:1px"><form-select class="fill" label="Modelo:" value=""></form-select><button class="sq">...</button><button class="sq d" aria-label="Editar">${svg('edit',26)}</button><button class="sq d" aria-label="Excluir">${svg('xis',20)}</button><button class="sq" aria-label="Salvar">${svg('disquete',26)}</button></div></form-group>
<footer><button class="gb"><u>O</u>K</button><button class="gb"><u>C</u>ancelar</button><button class="gb">Tutorial</button></footer>
</main>`});

def('status-bar',()=>`<style>:host{display:flex;background:#f0f0f0;border-top:2px solid #e2e2e2;border-bottom:3px double var(--dark);height:19px;margin-bottom:2px;font-size:13px;line-height:20px;padding-left:2px}
span{box-sizing:border-box;width:var(--w);flex:none;border-right:1px solid var(--dark);text-align:center;color:#777;white-space:nowrap}span:first-of-type{border-left:1px solid var(--dark);color:#000;text-align:left;padding-left:6px}</style>
${[['242034.838 , 7581697.626',216],['Ortho - F8',71],['Osnap - F3',73],['Atrib - F4',72],['SGrip - F5',72],['Grid - F7',72],['Snap - F9',72],['RTexto - F10',80],['Nome - F11',74],['Filtro - F12',73],['Snap Pto',72],['Snap 3D',72]].map(([t,w])=>`<span style="--w:${w}px">${t}</span>`).join('')}`);
def('command-log',()=>`<style>:host{display:flex;height:58px;border-left:1px solid var(--dark);margin-left:1px;overflow:hidden}div{flex:1;padding:2px 0 0 4px;line-height:19px;font-size:15px}p{margin:0}b{background:#f0f0f0;color:var(--navy);padding:0 4px 0 1px;margin-left:-1px;font-size:14px;line-height:18px;display:block;width:fit-content}scroll-bar{width:15px;height:40px;padding-top:7px;box-sizing:border-box}</style>
<div><p>Continuando comando Locação de pontos...</p><p>Comando: ImpASCII: Importar dados de um arquivo ASCII</p><b>Comando:</b></div><scroll-bar vertical nostart style="--t:15px"></scroll-bar>`);

def('topo-app',()=>`<style>:host{display:flex;flex-direction:column;height:100vh}
.work{flex:1;display:flex;min-height:0;background:var(--bar);border-top:1px solid #eee}
.center{flex:1;display:flex;flex-direction:column;min-width:0;position:relative;background:var(--soft);border-right:2px solid #f0f0f0}
.left{display:flex;gap:1px;width:67px}.right{width:31px;padding-left:1px}cad-canvas{flex:1;border-top:1px solid var(--line);border-right:1px solid var(--line);min-height:0}
import-dialog{position:absolute;left:1066px;top:29px}
.tabs{display:flex;height:25px;font-size:12px;line-height:18px}.tabs button{appearance:none;font:inherit;box-sizing:border-box;padding:0}
.tabs .cad{width:49px;background:#fff;border:0;border-right:2px solid var(--line);border-bottom:2px solid var(--line);font-weight:bold;height:24px}.tabs .ras{margin:1px 0 0 2px;width:57px;height:21px;background:#cce8ff;border:1px solid #99d1ff}.rest{flex:1;border-top:1px solid var(--line);display:flex}</style>
<topo-tabs></topo-tabs><topo-ribbon></topo-ribbon><top-toolbar></top-toolbar>
<div class="work"><div class="left"><side-bar style="--w:31px" icons="apagar copiar espelho offset matriz mover girar alinhar escala esticar cortar estender quebrar filete chanfro explodir"></side-bar><side-bar style="--w:35px;--pr:3px" icons="linha poli point target arco circulo elipse ret letra tag f1 f2 f3 hach contorno"></side-bar></div>
<div class="center"><cad-canvas></cad-canvas><div class="tabs"><button class="cad">C A D</button><div class="rest"><button class="ras">RASTER</button></div></div><import-dialog></import-dialog></div>
<div class="right"><side-bar style="--w:31px;--pr:0px;--pl:3px" icons="s1 s2 s3 s4 s5 s6 s7 s8 s9 s10 s11 s12 s13 s14"></side-bar></div></div>
<status-bar></status-bar><command-log></command-log>`);
</script>
</body>
</html>
